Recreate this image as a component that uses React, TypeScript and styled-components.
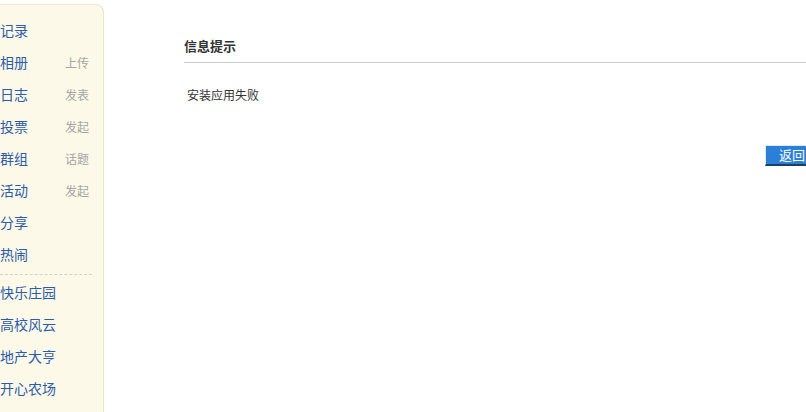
import * as React from "react";
import styled, { createGlobalStyle } from "styled-components";

const GlobalStyle = createGlobalStyle`
	html, body {
		margin: 0;
		padding: 0;
		background: #fff;
		overflow: hidden;
	}
	body {
		font-family: "Microsoft YaHei", "Noto Sans CJK SC", "Liberation Sans", sans-serif;
		font-size: 12px;
		color: #333;
	}
`;

const Page = styled.div`
	display: flex;
	align-items: flex-start;
	width: 806px;
	height: 412px;
`;

const Sidebar = styled.div`
	flex: 0 0 auto;
	width: 104px;
	height: 420px;
	margin-top: 4px;
	padding-top: 9px;
	box-sizing: border-box;
	background: #fcf9e8;
	border-right: 1px solid #ebe4c6;
	border-top: 1px solid #efe9cf;
	border-top-right-radius: 8px;
`;

const NavItem = styled.div`
	display: flex;
	align-items: center;
	height: 32px;
	width: 92px;
	font-size: 14px;
	color: #2c5ba8;
`;

const NavLabel = styled.span`
	flex: 1;
`;

const NavExtra = styled.span`
	font-size: 12px;
	color: #a5a5a5;
	margin-right: 3px;
`;

const Divider = styled.div`
	width: 92px;
	border-top: 1px dashed #d6d2c0;
	margin: 4px 0 1px 0;
`;

const Main = styled.div`
	flex: 0 0 auto;
	margin-left: 80px;
	width: 633px;
	padding-top: 37px;
`;

const Title = styled.div`
	font-size: 13px;
	font-weight: bold;
	color: #333;
	line-height: 18px;
	padding-bottom: 7px;
	border-bottom: 1px solid #cccccc;
`;

const Message = styled.div`
	font-size: 12px;
	color: #333;
	line-height: 18px;
	margin-top: 23px;
	padding-left: 3px;
`;

const Actions = styled.div`
	display: flex;
	justify-content: flex-end;
	margin-top: 41px;
`;

const Button = styled.button`
	height: 21px;
	padding: 0 12px 0 13px;
	font-family: inherit;
	font-size: 13px;
	line-height: 18px;
	color: #fff;
	background: #2b7fd6;
	border: none;
	border-top: 1px solid #dfe8f2;
	border-left: 1px solid #dfe8f2;
	border-bottom: 2px solid #1c3f66;
	cursor: pointer;
`;

const navMain: [string, string?][] = [
	["记录"],
	["相册", "上传"],
	["日志", "发表"],
	["投票", "发起"],
	["群组", "话题"],
	["活动", "发起"],
	["分享"],
	["热闹"],
];

const navApps = ["快乐庄园", "高校风云", "地产大亨", "开心农场"];

export default function App() {
	return (
		<>
			<GlobalStyle />
			<Page>
				<Sidebar>
					{navMain.map(([label, extra]) => (
						<NavItem key={label}>
							<NavLabel>{label}</NavLabel>
							{extra && <NavExtra>{extra}</NavExtra>}
						</NavItem>
					))}
					<Divider />
					{navApps.map((label) => (
						<NavItem key={label}>
							<NavLabel>{label}</NavLabel>
						</NavItem>
					))}
				</Sidebar>
				<Main>
					<Title>信息提示</Title>
					<Message>安装应用失败</Message>
					<Actions>
						<Button>返回</Button>
					</Actions>
				</Main>
			</Page>
		</>
	);
}
